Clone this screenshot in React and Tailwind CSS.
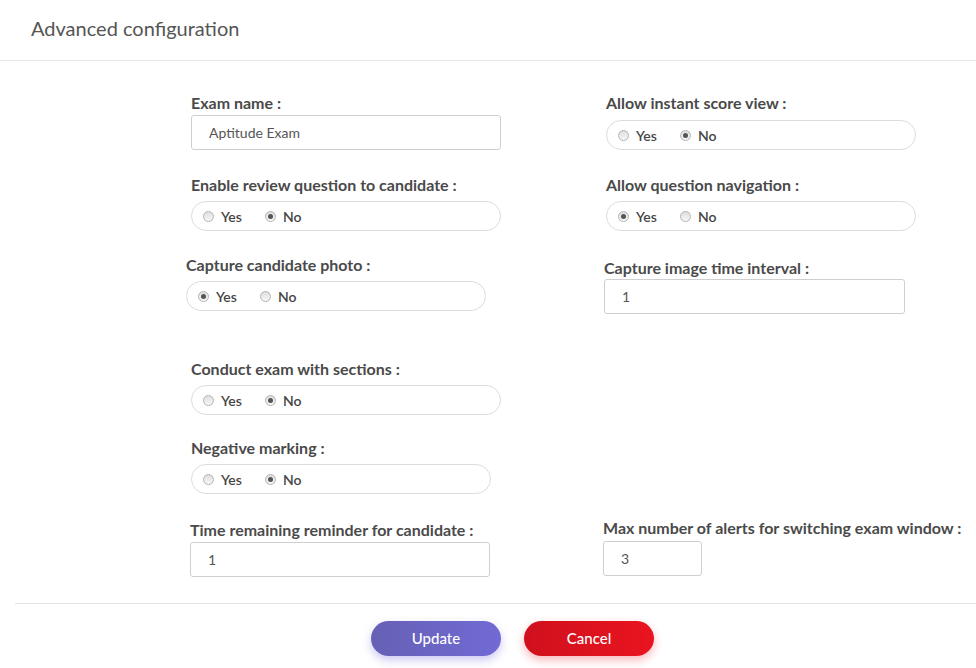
import clsx from 'clsx'

// Small label above each field
function Label({ children, className }) {
  return (
    <p className={clsx('text-[16px] leading-5 font-bold text-[#4a4a4a] whitespace-nowrap', className)}>
      {children}
    </p>
  )
}

function Radio({ checked, label }) {
  return (
    <span className="flex items-center gap-[7px]">
      <span className="w-[11px] h-[11px] rounded-full border border-[#b3b3b3] bg-gradient-to-b from-[#dedede] to-[#f7f7f7] flex items-center justify-center">
        {checked && <span className="w-[5px] h-[5px] rounded-full bg-[#555]" />}
      </span>
      <span className="text-[14px] font-semibold text-[#454545]">{label}</span>
    </span>
  )
}

function YesNo({ value, className }) {
  return (
    <div className={clsx('h-[30px] rounded-full border border-[#dcdcdc] flex items-center pl-[11px] gap-[23px]', className)}>
      <Radio checked={value === 'yes'} label="Yes" />
      <Radio checked={value === 'no'} label="No" />
    </div>
  )
}

function TextBox({ value, className }) {
  return (
    <input
      readOnly
      defaultValue={value}
      className={clsx('block h-[35px] rounded-[3px] border border-[#cfcfcf] pl-[17px] text-[14px] text-[#555] outline-none bg-white', className)}
    />
  )
}

export default function App() {
  return (
    <div className="w-[976px] h-[668px] bg-white overflow-hidden font-[family-name:Lato,sans-serif]">
      <div className="h-[61px] border-b border-[#e8e8e8] pl-[31px] flex items-center">
        <h1 className="text-[20px] text-[#555] pb-[4px]">Advanced configuration</h1>
      </div>

      <div className="flex items-start">
        {/* left column */}
        <div className="flex flex-col w-[310px] ml-[191px] pt-[32px]">
          <Label>Exam name :</Label>
          <TextBox value="Aptitude Exam" className="mt-[2px] w-[310px]" />

          <Label className="mt-[25px]">Enable review question to candidate :</Label>
          <YesNo value="no" className="mt-[6px] w-[310px]" />

          <div className="-ml-[5px] mt-[24px]">
            <Label>Capture candidate photo :</Label>
            <YesNo value="yes" className="mt-[6px] w-[300px]" />
          </div>

          <Label className="mt-[48px]">Conduct exam with sections :</Label>
          <YesNo value="no" className="mt-[6px] w-[310px]" />

          <Label className="mt-[23px]">Negative marking :</Label>
          <YesNo value="no" className="mt-[6px] w-[300px]" />

          <div className="-ml-[1px] mt-[26px]">
            <Label>Time remaining reminder for candidate :</Label>
            <TextBox value="1" className="mt-[2px] w-[300px]" />
          </div>
        </div>

        {/* right column */}
        <div className="flex flex-col w-[310px] ml-[105px] pt-[32px]">
          <Label>Allow instant score view :</Label>
          <YesNo value="no" className="mt-[7px] w-[310px]" />

          <Label className="mt-[25px]">Allow question navigation :</Label>
          <YesNo value="yes" className="mt-[6px] w-[310px]" />

          <div className="-ml-[2px] mt-[27px]">
            <Label>Capture image time interval :</Label>
            <TextBox value="1" className="mt-[1px] w-[301px]" />
          </div>

          <div className="-ml-[3px] mt-[204px]">
            <Label>Max number of alerts for switching exam window :</Label>
            <TextBox value="3" className="mt-[3px] w-[99px]" />
          </div>
        </div>
      </div>

      <div className="mt-[26px] ml-[15px] border-t border-[#e3e3e3]" />

      <div className="flex gap-[23px] ml-[371px] mt-[17px]">
        <button className="w-[130px] h-[35px] rounded-full text-white text-[15px] font-medium bg-gradient-to-r from-[#6660b5] to-[#716ad5] shadow-[0_4px_10px_rgba(105,100,220,0.35)]">
          Update
        </button>
        <button className="w-[130px] h-[35px] rounded-full text-white text-[15px] font-medium bg-gradient-to-r from-[#cf111d] to-[#e9141f] shadow-[0_4px_10px_rgba(230,20,30,0.3)]">
          Cancel
        </button>
      </div>
    </div>
  )
}
